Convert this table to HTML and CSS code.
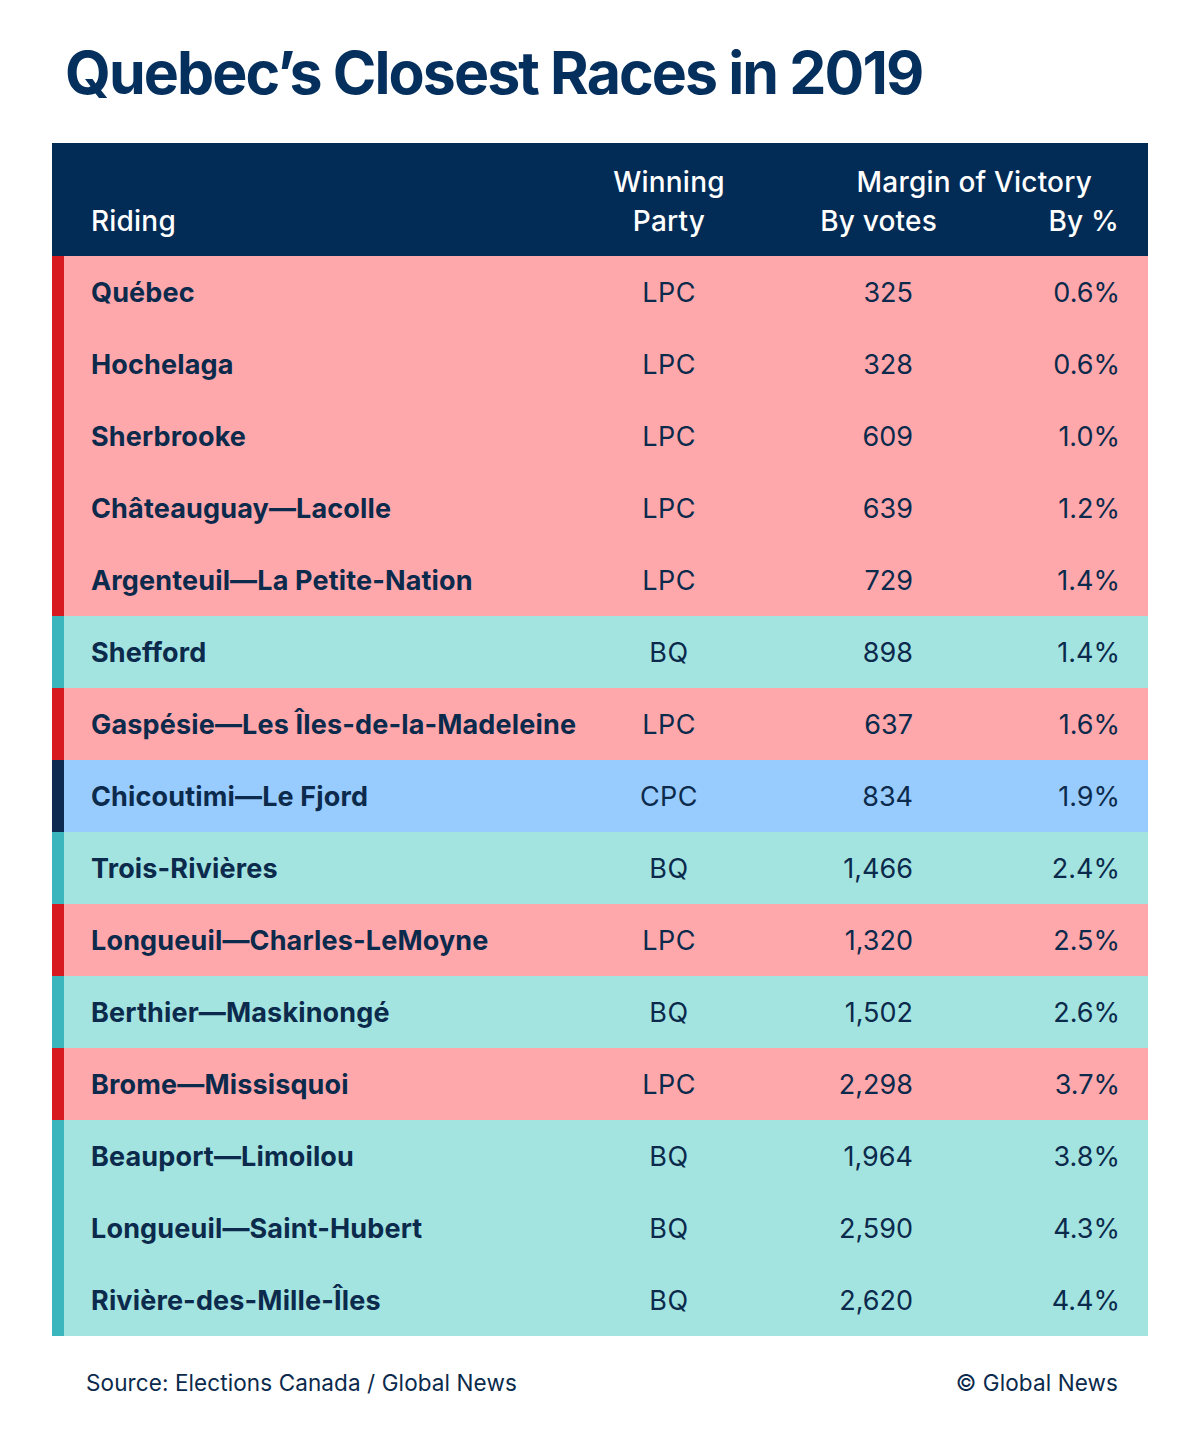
FILE: index.html
```html
<!DOCTYPE html>
<html lang="en">
<head>
<meta charset="utf-8">
<title>Quebec's Closest Races in 2019</title>
<link rel="stylesheet" href="styles.css">
</head>
<body>
<main class="page">
  <h1 class="title">Quebec’s Closest Races in 2019</h1>
  <section class="table">
    <div class="head">
      <div class="h-riding">Riding</div>
      <div class="h-party">Winning<br>Party</div>
      <div class="h-margin">Margin of Victory</div>
      <div class="h-votes">By votes</div>
      <div class="h-pct">By %</div>
    </div>
    <div class="row lpc"><span class="bar"></span><span class="riding">Québec</span><span class="party">LPC</span><span class="votes">325</span><span class="pct">0.6%</span></div>
    <div class="row lpc"><span class="bar"></span><span class="riding">Hochelaga</span><span class="party">LPC</span><span class="votes">328</span><span class="pct">0.6%</span></div>
    <div class="row lpc"><span class="bar"></span><span class="riding">Sherbrooke</span><span class="party">LPC</span><span class="votes">609</span><span class="pct">1.0%</span></div>
    <div class="row lpc"><span class="bar"></span><span class="riding">Châteauguay—Lacolle</span><span class="party">LPC</span><span class="votes">639</span><span class="pct">1.2%</span></div>
    <div class="row lpc"><span class="bar"></span><span class="riding">Argenteuil—La Petite-Nation</span><span class="party">LPC</span><span class="votes">729</span><span class="pct">1.4%</span></div>
    <div class="row bq"><span class="bar"></span><span class="riding">Shefford</span><span class="party">BQ</span><span class="votes">898</span><span class="pct">1.4%</span></div>
    <div class="row lpc"><span class="bar"></span><span class="riding">Gaspésie—Les Îles-de-la-Madeleine</span><span class="party">LPC</span><span class="votes">637</span><span class="pct">1.6%</span></div>
    <div class="row cpc"><span class="bar"></span><span class="riding">Chicoutimi—Le Fjord</span><span class="party">CPC</span><span class="votes">834</span><span class="pct">1.9%</span></div>
    <div class="row bq"><span class="bar"></span><span class="riding">Trois-Rivières</span><span class="party">BQ</span><span class="votes">1,466</span><span class="pct">2.4%</span></div>
    <div class="row lpc"><span class="bar"></span><span class="riding">Longueuil—Charles-LeMoyne</span><span class="party">LPC</span><span class="votes">1,320</span><span class="pct">2.5%</span></div>
    <div class="row bq"><span class="bar"></span><span class="riding">Berthier—Maskinongé</span><span class="party">BQ</span><span class="votes">1,502</span><span class="pct">2.6%</span></div>
    <div class="row lpc"><span class="bar"></span><span class="riding">Brome—Missisquoi</span><span class="party">LPC</span><span class="votes">2,298</span><span class="pct">3.7%</span></div>
    <div class="row bq"><span class="bar"></span><span class="riding">Beauport—Limoilou</span><span class="party">BQ</span><span class="votes">1,964</span><span class="pct">3.8%</span></div>
    <div class="row bq"><span class="bar"></span><span class="riding">Longueuil—Saint-Hubert</span><span class="party">BQ</span><span class="votes">2,590</span><span class="pct">4.3%</span></div>
    <div class="row bq"><span class="bar"></span><span class="riding">Rivière-des-Mille-Îles</span><span class="party">BQ</span><span class="votes">2,620</span><span class="pct">4.4%</span></div>
  </section>
  <footer class="foot">
    <span>Source: Elections Canada / Global News</span>
    <span>© Global News</span>
  </footer>
</main>
</body>
</html>
```

FILE: styles.css
```css
* { box-sizing: border-box; }
html, body { margin: 0; padding: 0; background: #ffffff; }
body {
  font-family: "Inter", "Noto Sans", "Liberation Sans", sans-serif;
  color: #0b2a4c;
}
.page {
  width: 1200px;
  height: 1430px;
  padding: 38px 52px 0 52px;
}
.title {
  margin: 0 0 0 13px;
  font-size: 59px;
  line-height: 70px;
  font-weight: 700;
  color: #052f5c;
  letter-spacing: -1.9px;
  height: 105px;
}
.table { width: 1096px; }
.head {
  background: #022b55;
  color: #ffffff;
  height: 113px;
  display: grid;
  grid-template-columns: 548px 138px 199px 182px 29px;
  grid-template-rows: 39px 39px;
  align-content: end;
  padding-bottom: 15px;
  font-size: 28px;
  font-weight: 500;
  line-height: 39px;
  letter-spacing: 0.2px;
}
.h-riding { grid-column: 1; grid-row: 2; padding-left: 39px; }
.h-party { grid-column: 2; grid-row: 1 / 3; text-align: center; }
.h-margin { grid-column: 3 / 5; grid-row: 1; text-align: right; padding-right: 27px; }
.h-votes { grid-column: 3; grid-row: 2; text-align: right; }
.h-pct { grid-column: 4; grid-row: 2; text-align: right; }
.row {
  display: grid;
  grid-template-columns: 12px 536px 138px 175px 207px 28px;
  height: 72px;
  align-items: center;
  font-size: 27px;
  color: #0b2a4c;
}
.bar { align-self: stretch; }
.riding { padding-left: 27px; font-weight: 700; letter-spacing: 0.15px; }
.party { text-align: center; font-weight: 400; letter-spacing: 0.5px; }
.votes { text-align: right; font-weight: 400; }
.pct { text-align: right; font-weight: 400; }
.lpc { background: #ffa8ab; }
.lpc .bar { background: #d71920; }
.bq { background: #a3e4e0; }
.bq .bar { background: #3cb6bd; }
.cpc { background: #99ccfe; }
.cpc .bar { background: #0e2a50; }
.foot {
  display: flex;
  justify-content: space-between;
  padding: 32px 30px 0 34px;
  font-size: 22.5px;
  line-height: 30px;
  letter-spacing: 0.1px;
  color: #0b2a4c;
}
```
